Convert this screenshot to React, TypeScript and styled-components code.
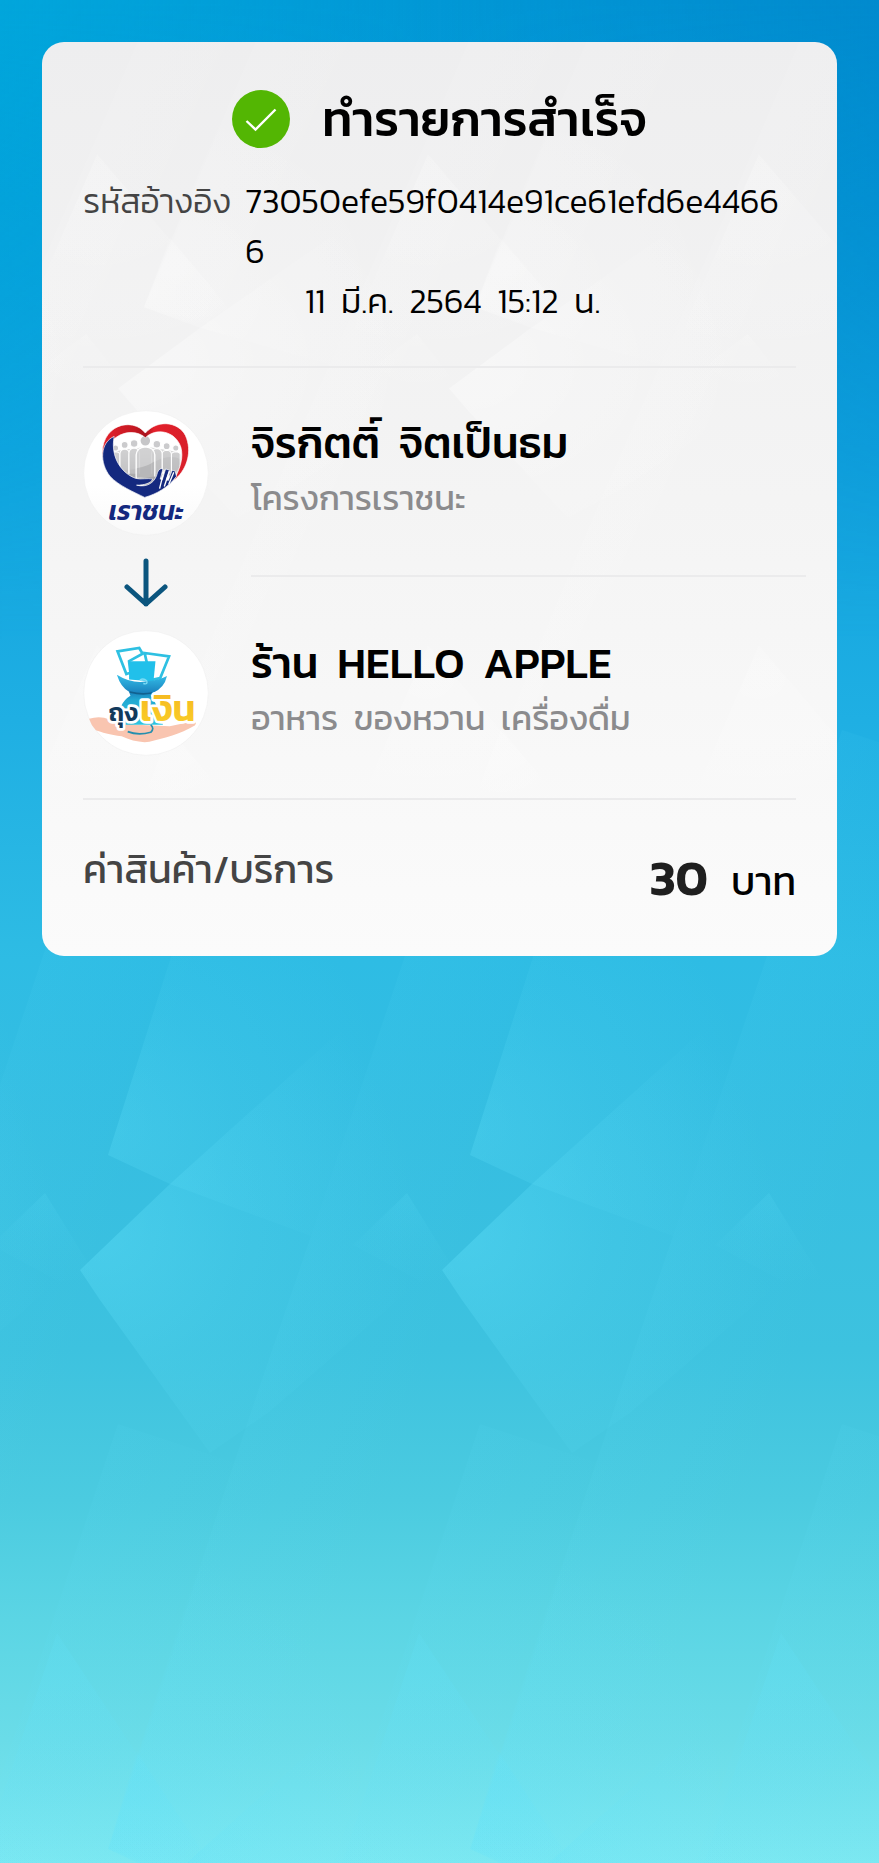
import React from "react";
import styled, { createGlobalStyle } from "styled-components";

const GlobalStyle = createGlobalStyle`
  *, *::before, *::after { box-sizing: border-box; }
  body {
    margin: 0;
    background: #3dbfe0;
    color: #000;
    font-family: Kanit, Prompt, "Noto Sans Thai", "Noto Sans", sans-serif;
  }
  h1, h2, p, dl, dt, dd { margin: 0; }
`;

const Page = styled.main`
  position: relative;
  min-height: 100vh;
  padding: 42px;
  overflow: hidden;
  background: linear-gradient(to bottom, #0298d6 0, #059ad8 200px, #10a2de 450px, #1fafe3 720px, #2ebce4 960px, #36bee1 1150px, #3dc2df 1350px, #4bcbe0 1500px, #5bd5e4 1620px, #6adce8 1740px, #7de8f1 1863px);

  &::before {
    content: "";
    position: absolute;
    inset: 0 0 auto;
    height: 640px;
    background: linear-gradient(to right, rgba(0, 180, 225, 0.5), rgba(0, 152, 214, 0) 50%, rgba(0, 125, 198, 0.5));
    mask-image: linear-gradient(to bottom, #000, transparent);
  }
`;

const Facets = styled.svg`
  position: absolute;
  inset: 0;
  width: 100%;
  height: 100%;
`;

const Card = styled.article`
  position: relative;
  overflow: hidden;
  padding: 0 41px;
  border-radius: 22px;
  background: linear-gradient(to bottom, #eeeeef, #f4f4f4 50%, #fbfbfb);
`;

const Header = styled.header`
  position: relative;
  display: flex;
  align-items: center;
  justify-content: center;
  gap: 32px;
  padding-top: 41px;
`;

const Title = styled.h1`
  font-size: 49px;
  line-height: 72px;
  font-weight: 500;
`;

const Details = styled.dl`
  position: relative;
  display: grid;
  grid-template-columns: auto 1fr;
  column-gap: 14px;
  padding-top: 21px;
  font-size: 34px;
  line-height: 50px;
  font-weight: 300;

  dt { color: #444; white-space: nowrap; }
  dd { word-break: break-all; }
`;

const DateLine = styled.p`
  position: relative;
  margin-bottom: 40px;
  padding-left: 26px;
  font-size: 34px;
  line-height: 50px;
  font-weight: 300;
  text-align: center;
`;

const Rule = styled.hr`
  position: relative;
  height: 2px;
  margin: 0;
  border: 0;
  background: #ebebec;
`;

const Transfer = styled.section`
  position: relative;
  display: grid;
  grid-template-columns: 126px 1fr;
  column-gap: 42px;
  padding: 42px 0;
`;

const Party = styled.div`
  display: flex;
  flex-direction: column;
  padding-top: 3px;
`;

const Name = styled.h2`
  font-size: 43px;
  line-height: 60px;
  font-weight: 500;
`;

const Note = styled.p`
  font-size: 34px;
  line-height: 50px;
  color: #8b8b8d;
`;

const Step = styled.div`
  display: flex;
  align-items: center;
  justify-content: center;
  height: 94px;
`;

const StepRule = styled(Rule)`
  align-self: center;
  margin: 0 -10px 14px 0;
`;

const Total = styled.section`
  position: relative;
  display: flex;
  justify-content: space-between;
  align-items: flex-start;
  padding: 42px 0 41px;
`;

const TotalLabel = styled.p`
  font-size: 39px;
  line-height: 54px;
  color: #444;
`;

const Amount = styled.p`
  display: flex;
  align-items: baseline;
  gap: 23px;
  padding-top: 2px;
  font-size: 39px;
  line-height: 68px;

  strong { font-size: 49px; font-weight: 600; color: #1f1f1f; }
`;

const Logo = styled.svg`
  display: block;
  width: 126px;
  height: 126px;
`;

const TILE_W = 362;
const TILE_H = 694;

interface FacetProps {
  id: string;
  tint: string;
  strength: number;
  rows: number[];
  transform?: string;
}

function FacetPattern({ id, tint, strength, rows, transform }: FacetProps) {
  const glow = (name: string, cx: number, cy: number, r: number, from: number) => (
    <radialGradient id={id + name} gradientUnits="userSpaceOnUse" cx={cx} cy={cy} r={r}>
      <stop offset="0" stopColor={tint} stopOpacity={from * strength} />
      <stop offset="0.45" stopColor={tint} stopOpacity={from * strength * 0.42} />
      <stop offset="1" stopColor={tint} stopOpacity="0" />
    </radialGradient>
  );
  return (
    <Facets aria-hidden="true">
      <defs>
        {glow("a", 108, 1130, 290, 0.3)}
        {glow("b", 100, 1235, 320, 0.44)}
        {glow("d", 407, 1193, 110, 0.16)}
        {glow("f", 419, 1680, 280, 0.24)}
        {glow("g", 137, 1790, 120, 0.2)}
        <linearGradient id={id + "c"} gradientUnits="userSpaceOnUse" x1="311" y1="1236" x2="462" y2="1286">
          <stop offset="0" stopColor={tint} stopOpacity={0.08 * strength} />
          <stop offset="1" stopColor={tint} stopOpacity="0" />
        </linearGradient>
        <g id={id}>
          <path d="M108 1155 171 957 260 680 440 740 420 957 392 995 311 1236 170 1184Z" fill={`url(#${id}a)`} />
          <path d="M80 1270 170 1184 370 1004 415 960 540 850 500 1200 420 1281 269 1412 210 1453 100 1300Z" fill={`url(#${id}b)`} />
          <path d="M480 730 392 995 311 1236 249 1418 202 1560 151 1721 109 1849 269 1902 640 783Z" fill={`url(#${id}c)`} />
          <path d="M407 1193 353 1245 420 1281 460 1279Z" fill={`url(#${id}d)`} />
          <path d="M419 1633 342 1863 320 1960 640 1960 493 1745Z" fill={`url(#${id}f)`} />
          <path d="M137 1751 108 1849 202 1890 200 1849Z" fill={`url(#${id}g)`} />
        </g>
      </defs>
      <g transform={transform}>
        {rows.map((row) =>
          [-2, -1, 0, 1].map((col) => (
            <use key={`${row}:${col}`} href={`#${id}`} x={col * TILE_W} y={row * TILE_H} />
          )),
        )}
      </g>
    </Facets>
  );
}

function SuccessIcon() {
  return (
    <svg width="58" height="58" viewBox="0 0 58 58" role="img" aria-label="สำเร็จ">
      <circle cx="29" cy="29" r="29" fill="#53b603" />
      <path d="M14.500 31 23.500 39.500 43.500 19.500" fill="none" stroke="#fff" strokeWidth="2.400" />
    </svg>
  );
}

function HeartLogo() {
  const people: [number, number, number, number][] = [
    [140, 172, 9, 10], [318, 172, 9, 10], [167, 163, 10, 11], [291, 167, 10, 11], [195, 159, 11, 13], [262, 161, 11, 13],
  ];
  return (
    <Logo viewBox="44 60 372 372" aria-hidden="true">
      <defs>
        <linearGradient id="crowd" x1="0" y1="0" x2="0" y2="1">
          <stop offset="0" stopColor="#dedede" />
          <stop offset="1" stopColor="#a9a9ab" />
        </linearGradient>
        <linearGradient id="ribbon" x1="0" y1="0" x2="1" y2="0">
          <stop offset="0" stopColor="#e3202b" />
          <stop offset="0.38" stopColor="#c41822" />
          <stop offset="0.5" stopColor="#a8141d" />
          <stop offset="0.6" stopColor="#e3202b" />
          <stop offset="1" stopColor="#d81f2a" />
        </linearGradient>
        <linearGradient id="disc" x1="0" y1="0" x2="0" y2="1">
          <stop offset="0.6" stopColor="#fff" />
          <stop offset="1" stopColor="#f9f9f9" />
        </linearGradient>
      </defs>
      <circle cx="230" cy="246" r="184" fill="url(#disc)" stroke="#f0f0f0" strokeWidth="2" />
      <path d="M126 190 Q130 178 142 182 L170 176 200 174 228 168 262 174 292 178 322 184 334 192 332 222 316 250 262 262 240 284 190 274 150 250 134 222Z" fill="url(#crowd)" />
      <path d="M128 236 Q210 244 262 210 Q300 190 334 206 L326 238 Q280 248 250 266 L180 268Z" fill="#929294" opacity="0.35" />
      {people.map(([x, y, r, w]) => (
        <g key={x} stroke="#fff" strokeWidth="3">
          <path d={`M${x - w - 3} 248 V190 Q${x - w - 2} ${y + r + 3} ${x} ${y + r + 2} Q${x + w + 2} ${y + r + 3} ${x + w + 3} 190 V248`} fill="#c9c9cb" fillOpacity="0.6" />
          <circle cx={x} cy={y} r={r} fill="#cbcbcd" />
        </g>
      ))}
      <path d="M201 262 V192 Q203 171 228 169 Q254 171 256 192 V256" fill="#cfcfd1" fillOpacity="0.8" stroke="#fff" strokeWidth="4" />
      <path d="M203 232 Q236 226 254 212 V258 H203Z" fill="#a6a6a8" opacity="0.5" />
      <circle cx="228" cy="151" r="16" fill="#c6c6c8" stroke="#fff" strokeWidth="4" />
      <path d="M102 204 C90 104 190 78 228 128 C268 82 336 98 350 144 C366 190 348 240 312 268 C332 230 341 200 333 170 C316 120 258 112 228 142 C196 112 122 122 102 204Z" fill="url(#ribbon)" stroke="#fff" strokeWidth="2" />
      <path d="M136 138 C94 156 92 216 124 256 C150 284 194 302 226 318 C262 308 296 288 320 256 L316 240 307 238 296 268 290 266 300 238 288 234 278 266 272 264 280 234 Q270 230 264 244 C258 274 234 290 202 282 C226 282 244 276 250 264 C236 260 214 266 200 262 C160 248 124 202 136 138Z" fill="#14297f" stroke="#fff" strokeWidth="2" />
      <path d="M284 236 270 292 M299 240 284 286 M312 244 297 280" stroke="#fff" strokeWidth="4" fill="none" />
      <text x="230" y="386" textAnchor="middle" fill="#14297f" fontSize="78" fontWeight="600" fontStyle="italic">เราชนะ</text>
    </Logo>
  );
}

function PurseLogo() {
  return (
    <Logo viewBox="44 720 372 372" aria-hidden="true">
      <defs>
        <linearGradient id="bag" x1="0" y1="0" x2="0" y2="1">
          <stop offset="0" stopColor="#35bfe9" />
          <stop offset="0.35" stopColor="#1b84bf" />
          <stop offset="0.5" stopColor="#22a9d2" />
          <stop offset="1" stopColor="#2ec4e0" />
        </linearGradient>
        <linearGradient id="gold" x1="0" y1="0" x2="0" y2="1">
          <stop offset="0" stopColor="#f4b41e" />
          <stop offset="1" stopColor="#fbd22b" />
        </linearGradient>
      </defs>
      <circle cx="230" cy="906" r="184" fill="#fff" stroke="#f0f0f0" strokeWidth="2" />
      <path d="M62 982 Q94 972 122 984 L200 1000 300 1004 366 990 Q384 990 374 1002 C330 1028 286 1038 240 1050 C214 1054 184 1046 158 1034 C124 1030 98 1022 82 1016 Q68 1002 62 982Z" fill="#f9c5b0" />
      <path d="M146 783 210 773 220 790 180 812 184 846 172 850Z" fill="#fff" stroke="#2ec0e2" strokeWidth="8" />
      <path d="M226 788 298 798 272 862 244 868Z" fill="#fff" stroke="#2ec0e2" strokeWidth="8" />
      <path d="M180 812 258 812 252 872 180 866Z" fill="#21c0ea" />
      <path d="M144 852 Q192 882 240 870 Q270 868 292 856 Q284 892 250 906 L244 914 Q268 946 280 1000 L146 1000 Q146 936 184 914 L180 902 Q156 890 144 852Z" fill="url(#bag)" />
      <path d="M182 903 Q216 912 248 906" fill="none" stroke="#11618f" strokeWidth="5" />
      <path d="M212 868 Q222 860 232 870 Q236 882 222 878" fill="none" stroke="#7bdcf4" strokeWidth="4" />
      <path d="M176 1020 Q206 1032 244 1022 Q256 1010 244 1000" fill="none" stroke="#258fae" strokeWidth="5" />
      <g strokeLinejoin="round" paintOrder="stroke" stroke="#fff" strokeWidth="16">
        <text x="120" y="990" fontSize="72" fontWeight="600" fill="#123a5c">ถุง</text>
        <text x="212" y="990" fontSize="108" fontWeight="600" fill="url(#gold)">เงิน</text>
      </g>
    </Logo>
  );
}

function DownArrow() {
  return (
    <svg width="44" height="50" viewBox="0 0 44 50" aria-hidden="true">
      <path d="M22 3V46M3 29 22 46 41 29" fill="none" stroke="#0b557e" strokeWidth="5" strokeLinecap="round" strokeLinejoin="round" />
    </svg>
  );
}

/* Words are set apart by a wide gap: a no-break space followed by a normal one. */
const wide = (text: string) => text.split(" ").join("\u00a0 ");

export default function App() {
  return (
    <Page>
      <GlobalStyle />
      <FacetPattern id="facet" tint="#62e2fb" strength={0.85} rows={[0, 1]} />
      <Card>
        <FacetPattern id="pale" tint="#ffffff" strength={0.9} rows={[-1, 0]} transform="translate(3 -552) scale(0.914 0.7075)" />
        <Header>
          <SuccessIcon />
          <Title>ทำรายการสำเร็จ</Title>
        </Header>
        <Details>
          <dt>รหัสอ้างอิง</dt>
          <dd>73050efe59f0414e91ce61efd6e44666</dd>
        </Details>
        <DateLine>{wide("11 มี.ค. 2564 15:12 น.")}</DateLine>
        <Rule />
        <Transfer>
          <HeartLogo />
          <Party>
            <Name>{wide("จิรกิตติ์ จิตเป็นธม")}</Name>
            <Note>โครงการเราชนะ</Note>
          </Party>
          <Step><DownArrow /></Step>
          <StepRule />
          <PurseLogo />
          <Party>
            <Name>{wide("ร้าน HELLO APPLE")}</Name>
            <Note>{wide("อาหาร ของหวาน เครื่องดื่ม")}</Note>
          </Party>
        </Transfer>
        <Rule />
        <Total>
          <TotalLabel>ค่าสินค้า/บริการ</TotalLabel>
          <Amount><strong>30</strong> บาท</Amount>
        </Total>
      </Card>
    </Page>
  );
}
